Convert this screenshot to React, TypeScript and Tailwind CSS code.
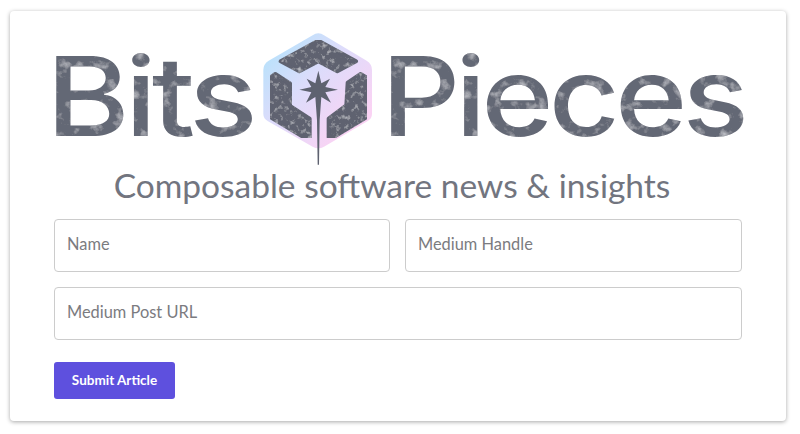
export default function App() {
  const wordClass =
    "font-['Inter',sans-serif] font-medium text-[110px] leading-none tracking-[-0.04em] text-[#646875] [filter:url(#grunge)]";
  const inputClass =
    "h-[53px] border border-[#cccccc] rounded-[4px] px-[12px] pb-[5px] text-[16.4px] placeholder:text-[#7b7b80] outline-none";
  return (
    <div className="w-[800px] h-[434px] bg-white pt-[11px] pl-[10px] overflow-hidden font-['Lato',sans-serif]">
      <svg width="0" height="0" className="absolute">
        <filter id="grunge" x="0" y="0" width="100%" height="100%">
          <feTurbulence type="fractalNoise" baseFrequency="0.1" numOctaves="4" seed="11" result="n" />
          <feColorMatrix in="n" type="matrix" values="0 0 0 0 0.5  0 0 0 0 0.51  0 0 0 0 0.55  0 0 0 2.4 -1.3" result="spots" />
          <feComposite in="spots" in2="SourceGraphic" operator="in" result="clip" />
          <feMerge result="m">
            <feMergeNode in="SourceGraphic" />
            <feMergeNode in="clip" />
          </feMerge>
          <feGaussianBlur in="m" stdDeviation="0.45" />
        </filter>
        <filter id="grungeIcon" x="0" y="0" width="100%" height="100%">
          <feTurbulence type="fractalNoise" baseFrequency="0.07" numOctaves="4" seed="5" result="n" />
          <feColorMatrix in="n" type="matrix" values="0 0 0 0 0.5  0 0 0 0 0.51  0 0 0 0 0.55  0 0 0 2.4 -1.3" result="spots" />
          <feComposite in="spots" in2="SourceGraphic" operator="in" result="clip" />
          <feMerge result="m">
            <feMergeNode in="SourceGraphic" />
            <feMergeNode in="clip" />
          </feMerge>
          <feGaussianBlur in="m" stdDeviation="1.2" />
        </filter>
        <linearGradient id="hexg" x1="0.1" y1="0.05" x2="0.85" y2="0.8">
          <stop offset="0" stopColor="#b5e2fb" />
          <stop offset="0.45" stopColor="#dcdcfb" />
          <stop offset="1" stopColor="#fad3f4" />
        </linearGradient>
      </svg>
      <div className="w-[776px] h-[410px] bg-white rounded-[4px] shadow-[0_1px_4px_rgba(0,0,0,0.35)] px-[44px] flex flex-col">
        <div className="h-[157px] flex justify-between items-start relative">
          <div className={wordClass + " mt-[30px] -ml-[8px] origin-left scale-x-[1.16]"}>Bits</div>
          <div className={wordClass + " mt-[30px] -mr-[2px] origin-right scale-x-[1.12]"}>Pieces</div>
          <svg viewBox="0 0 420 480" className="absolute left-[196px] top-[9px] w-[140px] h-[160px]">
            <path
              d="M205 40 Q214 40 222 46 L350 122 Q366 132 366 150 L366 282 Q366 296 352 304 L222 380 Q205 390 188 380 L54 304 Q40 296 40 282 L40 150 Q40 132 56 122 L188 46 Q196 40 205 40 Z"
              fill="url(#hexg)"
            />
            <g filter="url(#grungeIcon)">
              <g fill="#5e6270" stroke="#5e6270" strokeWidth="12" strokeLinejoin="round">
                <path d="M205 62 L318 124 L262 154 L205 124 L148 154 L92 124 Z" />
                <path d="M62 172 L76 162 L120 190 L120 258 L179 296 L179 354 L165 354 L62 292 Z" />
                <path d="M349 172 L332 162 L293 188 L289 256 L236 296 L236 352 L246 354 L349 292 Z" />
              </g>
            </g>
            <path
              fill="#5e6270"
              d="M205 152 L214 190 L240 176 L226 201 L264 209 L226 217 L243 248 L214 231 L209 300 L207 434 L203 434 L201 300 L196 231 L168 248 L184 217 L148 209 L184 201 L170 176 L196 190 Z"
            />
          </svg>
        </div>
        <h1 className="text-center text-[33.5px] leading-[40px] font-normal text-[#72757f] -mt-[3px] pr-[12px]">
          Composable software news &amp; insights
        </h1>
        <div className="mt-[14px] flex gap-[15px]">
          <input placeholder="Name" className={"w-[336px] " + inputClass} />
          <input placeholder="Medium Handle" className={"w-[337px] " + inputClass} />
        </div>
        <input placeholder="Medium Post URL" className={"mt-[15px] w-[688px] " + inputClass} />
        <button className="mt-[22px] w-[121px] h-[37px] rounded-[3px] bg-[#5e50de] text-white text-[13.5px] font-bold">
          Submit Article
        </button>
      </div>
    </div>
  );
}
